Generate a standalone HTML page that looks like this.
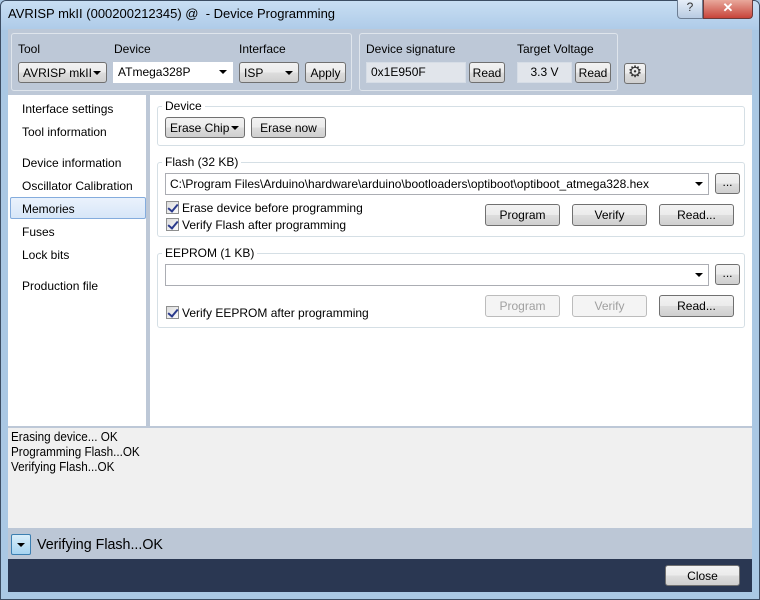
<!DOCTYPE html><html><head><style>
*{box-sizing:border-box}
body{margin:0;width:760px;height:600px;position:relative;overflow:hidden;font-family:"Liberation Sans",sans-serif;font-size:12px;color:#000;background:#aac8e4}
.a{position:absolute}
.btn{position:absolute;border:1px solid #707070;border-radius:3px;background:linear-gradient(#f2f2f2 0%,#ebebeb 50%,#dddddd 51%,#cfcfcf 100%);text-align:center;font-size:12px;line-height:20px}
.dis{border-color:#bcbcbc;color:#a0a0a0;background:#f4f4f4}
.combo{position:absolute;background:#fff;border:1px solid #abadb3;font-size:12px;line-height:18px;padding-left:4px}
.arr{position:absolute;right:5px;top:7px;width:0;height:0;border-left:4px solid transparent;border-right:4px solid transparent;border-top:4px solid #000}
.grp{position:absolute;border:1px solid #d5dfe5;border-radius:3px}
.lg{position:absolute;background:#fff;padding:0 3px;font-size:12px;line-height:14px}
.cb{position:absolute;width:13px;height:13px;border:1px solid #8e8f8f;background:linear-gradient(135deg,#dcdcdc,#fbfbfb)}
.cb:after{content:"";position:absolute;left:3px;top:0px;width:4px;height:8px;border:solid #2a3a8c;border-width:0 2px 2px 0;transform:rotate(40deg)}
.nav{position:absolute;left:22px;font-size:12px}
</style></head><body>
<div class="a" style="left:0;top:0;width:760px;height:600px;border:1px solid #3c4d63;border-radius:6px 6px 0 0;background:#aac8e4"></div>
<div class="a" style="left:1px;top:1px;width:758px;height:29px;border-radius:5px 5px 0 0;background:linear-gradient(#c8def3,#aecbe8)"></div>
<div class="a" style="left:8px;top:6px;font-size:13px">AVRISP mkII (000200212345) @&nbsp; - Device Programming</div>
<div class="a" style="left:677px;top:0;width:26px;height:19px;border:1px solid #6d7e93;border-top:0;border-radius:0 0 0 4px;background:linear-gradient(#e6eef8,#b8cbe2);text-align:center;font-size:12px;color:#333">?</div>
<div class="a" style="left:703px;top:0;width:50px;height:19px;border:1px solid #6d3a3a;border-top:0;border-radius:0 0 4px 0;background:linear-gradient(#e9a99c,#c7443a);text-align:center;color:#fff;font-weight:bold;font-size:13px">✕</div>
<div class="a" style="left:8px;top:29px;width:744px;height:67px;background:#bdc8d7"></div>
<div class="a" style="left:11px;top:33px;width:341px;height:58px;border:1px solid #dfe5ec;border-radius:3px"></div>
<div class="a" style="left:359px;top:33px;width:259px;height:58px;border:1px solid #dfe5ec;border-radius:3px"></div>
<div class="a" style="left:18px;top:42px">Tool</div>
<div class="a" style="left:114px;top:42px">Device</div>
<div class="a" style="left:239px;top:42px">Interface</div>
<div class="a" style="left:366px;top:42px">Device signature</div>
<div class="a" style="left:517px;top:42px">Target Voltage</div>
<div class="btn" style="left:18px;top:62px;width:89px;height:21px;text-align:left;padding-left:4px">AVRISP mkII<span class="arr" style="top:8px"></span></div>
<div class="combo" style="left:113px;top:62px;width:120px;height:21px;border-color:#fff">ATmega328P<span class="arr"></span></div>
<div class="btn" style="left:239px;top:62px;width:60px;height:21px;text-align:left;padding-left:4px">ISP<span class="arr" style="top:8px"></span></div>
<div class="btn" style="left:305px;top:62px;width:41px;height:21px">Apply</div>
<div class="a" style="left:366px;top:62px;width:100px;height:21px;border:1px solid #d6dde6;background:#e1e5eb;padding-left:4px;line-height:19px">0x1E950F</div>
<div class="btn" style="left:469px;top:62px;width:36px;height:21px">Read</div>
<div class="a" style="left:517px;top:62px;width:55px;height:21px;border:1px solid #d6dde6;background:#e1e5eb;text-align:center;line-height:19px">3.3 V</div>
<div class="btn" style="left:575px;top:62px;width:36px;height:21px">Read</div>
<div class="btn" style="left:624px;top:63px;width:22px;height:21px;font-size:16px;line-height:18px;color:#333">⚙</div>
<div class="a" style="left:8px;top:95px;width:138px;height:331px;background:#fff"></div>
<div class="a" style="left:146px;top:95px;width:4px;height:331px;background:#bdc8d7"></div>
<div class="a" style="left:10px;top:197px;width:136px;height:22px;border:1px solid #84acdd;border-radius:2px;background:linear-gradient(#eaf2fc,#d7e6f8)"></div>
<div class="nav" style="top:102px">Interface settings</div>
<div class="nav" style="top:125px">Tool information</div>
<div class="nav" style="top:156px">Device information</div>
<div class="nav" style="top:179px">Oscillator Calibration</div>
<div class="nav" style="top:202px">Memories</div>
<div class="nav" style="top:225px">Fuses</div>
<div class="nav" style="top:248px">Lock bits</div>
<div class="nav" style="top:279px">Production file</div>
<div class="a" style="left:150px;top:95px;width:602px;height:331px;background:#fff"></div>
<div class="grp" style="left:157px;top:106px;width:588px;height:40px"></div>
<div class="lg" style="left:162px;top:99px">Device</div>
<div class="btn" style="left:165px;top:117px;width:80px;height:21px;text-align:left;padding-left:4px">Erase Chip<span class="arr" style="top:8px"></span></div>
<div class="btn" style="left:251px;top:117px;width:75px;height:21px">Erase now</div>
<div class="grp" style="left:157px;top:162px;width:588px;height:75px"></div>
<div class="lg" style="left:162px;top:155px">Flash (32 KB)</div>
<div class="combo" style="left:165px;top:173px;width:544px;height:22px;line-height:20px">C:\Program Files\Arduino\hardware\arduino\bootloaders\optiboot\optiboot_atmega328.hex<span class="arr" style="top:8px"></span></div>
<div class="btn" style="left:715px;top:173px;width:25px;height:21px;line-height:16px">...</div>
<div class="cb" style="left:166px;top:201px"></div><div class="a" style="left:182px;top:201px">Erase device before programming</div>
<div class="cb" style="left:166px;top:218px"></div><div class="a" style="left:182px;top:218px">Verify Flash after programming</div>
<div class="btn" style="left:485px;top:204px;width:75px;height:22px">Program</div>
<div class="btn" style="left:572px;top:204px;width:75px;height:22px">Verify</div>
<div class="btn" style="left:659px;top:204px;width:75px;height:22px">Read...</div>
<div class="grp" style="left:157px;top:253px;width:588px;height:75px"></div>
<div class="lg" style="left:162px;top:246px">EEPROM (1 KB)</div>
<div class="combo" style="left:165px;top:264px;width:544px;height:22px"><span class="arr" style="top:8px"></span></div>
<div class="btn" style="left:715px;top:264px;width:25px;height:21px;line-height:16px">...</div>
<div class="cb" style="left:166px;top:306px"></div><div class="a" style="left:182px;top:306px">Verify EEPROM after programming</div>
<div class="btn dis" style="left:485px;top:295px;width:75px;height:22px">Program</div>
<div class="btn dis" style="left:572px;top:295px;width:75px;height:22px">Verify</div>
<div class="btn" style="left:659px;top:295px;width:75px;height:22px">Read...</div>
<div class="a" style="left:8px;top:426px;width:744px;height:3px;background:#bdc8d7"></div>
<div class="a" style="left:8px;top:428px;width:744px;height:100px;background:#f0f0f0"></div>
<div class="a" style="left:11px;top:429px;font-size:13px;line-height:15px;transform:scaleX(0.9);transform-origin:left">Erasing device... OK<br>Programming Flash...OK<br>Verifying Flash...OK</div>
<div class="a" style="left:8px;top:528px;width:744px;height:31px;background:#bcc7d6"></div>
<div class="a" style="left:11px;top:534px;width:20px;height:21px;border:1px solid #3c7fb1;border-radius:2px;background:linear-gradient(#d9eefa,#a6d4f1)"><span class="arr" style="left:5px;top:8px;right:auto"></span></div>
<div class="a" style="left:37px;top:536px;font-size:15px;transform:scaleX(0.95);transform-origin:left">Verifying Flash...OK</div>
<div class="a" style="left:8px;top:559px;width:744px;height:33px;background:#2a3752"></div>
<div class="btn" style="left:665px;top:565px;width:75px;height:21px">Close</div>
</body></html>
